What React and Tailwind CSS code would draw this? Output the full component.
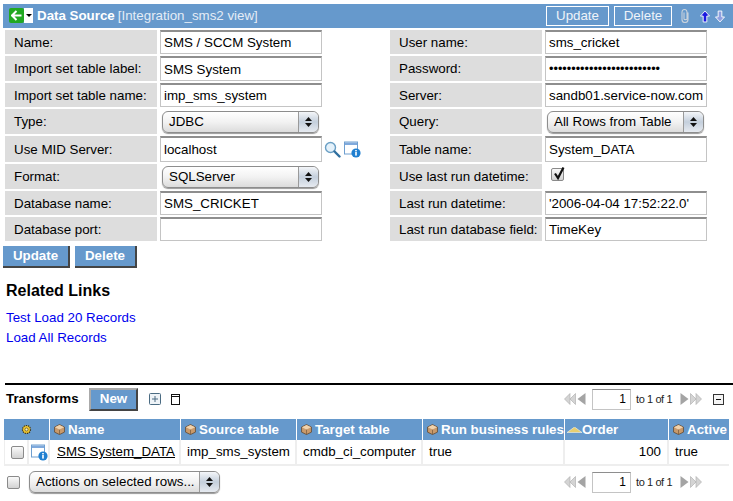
import React from "react";

const leftRows = [
  { label: "Name:", value: "SMS / SCCM System", h: "h-[24px]" },
  { label: "Import set table label:", value: "SMS System", h: "h-[25px]" },
  { label: "Import set table name:", value: "imp_sms_system", h: "h-[24px]" },
  { label: "Type:", select: "JDBC", h: "h-[25px]" },
  { label: "Use MID Server:", value: "localhost", h: "h-[26px]", lookup: true },
  { label: "Format:", select: "SQLServer", h: "h-[25px]" },
  { label: "Database name:", value: "SMS_CRICKET", h: "h-[24px]" },
  { label: "Database port:", value: "", h: "h-[24px]" },
];

const rightRows = [
  { label: "User name:", value: "sms_cricket", h: "h-[24px]" },
  { label: "Password:", value: "•••••••••••••••••••••••••", h: "h-[25px]", small: true },
  { label: "Server:", value: "sandb01.service-now.com", h: "h-[24px]" },
  { label: "Query:", select: "All Rows from Table", h: "h-[25px]" },
  { label: "Table name:", value: "System_DATA", h: "h-[26px]" },
  { label: "Use last run datetime:", check: true, h: "h-[25px]" },
  { label: "Last run datetime:", value: "'2006-04-04 17:52:22.0'", h: "h-[24px]" },
  { label: "Last run database field:", value: "TimeKey", h: "h-[24px]" },
];

const Stepper = () => (
  <span className="w-[20px] h-full border-l border-[#9a9a9a] bg-gradient-to-b from-[#f4f6f9] via-[#c4cfdc] to-[#e6eaf0] flex flex-col items-center justify-center gap-[2px] rounded-r-[5px]">
    <svg width="7" height="4" viewBox="0 0 7 4"><path d="M3.5 0L7 4H0z" fill="#111" /></svg>
    <svg width="7" height="4" viewBox="0 0 7 4"><path d="M3.5 4L7 0H0z" fill="#111" /></svg>
  </span>
);

const Select = ({ text, w }) => (
  <div className={`${w} h-[22px] flex items-center justify-between border border-[#8d8d8d] rounded-[6px] bg-gradient-to-b from-[#ffffff] via-[#f2f2f2] to-[#dcdcdc] shadow-[0_1px_1px_#999] overflow-hidden`}>
    <span className="pl-[6px] text-[13.33px] text-black whitespace-nowrap">{text}</span>
    <Stepper />
  </div>
);

const Input = ({ value, small }) => (
  <div className="w-[162px] h-full bg-white border border-[#c4c4c4] border-t-[#8e8e8e] border-t-[2px] pl-[3px] pt-[1px] flex items-center overflow-hidden whitespace-nowrap text-black text-[13.33px]">
    <span className={small ? "text-[12.7px]" : ""}>{value}</span>
  </div>
);

const Checkbox = ({ checked }) => (
  <span className="relative w-[13px] h-[13px] border border-[#8a8a8a] rounded-[2px] bg-gradient-to-b from-[#fafafa] to-[#d2d2d2] inline-block shrink-0">
    {checked && (
      <svg className="absolute left-0 -top-[3px]" width="14" height="15" viewBox="0 0 14 15">
        <path d="M3 7.5L6 12L11.5 1.5" fill="none" stroke="#111" strokeWidth="2.2" />
      </svg>
    )}
  </span>
);

const MagnifierIcon = () => (
  <svg width="17" height="17" viewBox="0 0 17 17">
    <circle cx="6.5" cy="6.5" r="5" fill="#e4f1fa" stroke="#6a9fc4" strokeWidth="1.4" />
    <path d="M10.5 10.5L15.5 15.5" stroke="#2f6f9f" strokeWidth="2.4" strokeLinecap="round" />
  </svg>
);

const InfoIcon = () => (
  <svg width="17" height="17" viewBox="0 0 17 17">
    <rect x="0.5" y="1" width="13" height="12" fill="#fff" stroke="#6f9fd0" />
    <rect x="1" y="1.5" width="12" height="2.5" fill="#7fa9dc" />
    <circle cx="12" cy="12" r="4.6" fill="#1f7fd0" />
    <rect x="11.2" y="11" width="1.6" height="3.6" fill="#fff" />
    <rect x="11.2" y="9" width="1.6" height="1.4" fill="#fff" />
  </svg>
);

const CubeIcon = () => (
  <svg width="11" height="11" viewBox="0 0 10 10" className="shrink-0">
    <path d="M5 0.5L9.5 2.8V7.4L5 9.6L0.5 7.4V2.8z" fill="#c99a6b" stroke="#5c4630" strokeWidth="0.7" />
    <path d="M0.8 3L5 5.1L9.2 3L5 1z" fill="#f0d3ae" />
    <path d="M5 5.2V9.4" stroke="#6e5238" strokeWidth="0.6" />
  </svg>
);

const GearIcon = () => (
  <svg width="11" height="11" viewBox="0 0 11 11">
    <circle cx="5.5" cy="5.5" r="4" fill="#f0c830" stroke="#3a3320" strokeWidth="1.2" strokeDasharray="1.4 0.8" />
    <circle cx="5.5" cy="5.5" r="1.5" fill="#fff3b0" stroke="#3a3320" strokeWidth="0.6" />
  </svg>
);

const Pager = () => (
  <div className="flex items-center">
    <svg width="22" height="12" viewBox="0 0 22 12">
      <path d="M6 0.5V11.5L0.5 6z" fill="#d4d4d4" stroke="#aaa" strokeWidth="0.6" />
      <path d="M11.5 0.5V11.5L6 6z" fill="#d4d4d4" stroke="#aaa" strokeWidth="0.6" />
      <path d="M21.5 0V12L13.5 6z" fill="#a4a4a4" />
    </svg>
    <div className="w-[39px] h-[21px] ml-[6px] bg-white border border-[#c4c4c4] border-t-[#8e8e8e] flex items-center justify-end pr-[4px] text-[12px] text-black">1</div>
    <span className="ml-[5px] text-[11px] tracking-[-0.4px] text-[#222] w-[37px] whitespace-nowrap">to 1 of 1</span>
    <svg width="22" height="12" viewBox="0 0 22 12" className="ml-[7px]">
      <path d="M0.5 0V12L8.5 6z" fill="#a4a4a4" />
      <path d="M10.5 0.5V11.5L16 6z" fill="#d4d4d4" stroke="#aaa" strokeWidth="0.6" />
      <path d="M16 0.5V11.5L21.5 6z" fill="#d4d4d4" stroke="#aaa" strokeWidth="0.6" />
    </svg>
  </div>
);

const columns = [
  { label: "Name", w: "w-[131px]" },
  { label: "Source table", w: "w-[116px]" },
  { label: "Target table", w: "w-[126px]" },
  { label: "Run business rules", w: "w-[142px]" },
  { label: "Order", w: "w-[104px] -ml-[2px] pr-[2px]", sort: true },
  { label: "Active", w: "w-[59px]" },
];

const FormRow = ({ row }) => (
  <div className={`flex ${row.h} mb-[2px]`}>
    <div className="w-[152px] bg-[#dddddd] pl-[9px] pt-[1px] flex items-center text-[13.33px] text-black whitespace-nowrap">{row.label}</div>
    <div className="ml-[3px] flex items-center h-full">
      {row.select && <Select text={row.select} w="w-[157px] ml-[2px]" />}
      {row.check && <span className="ml-[6px]"><Checkbox checked /></span>}
      {row.value !== undefined && <Input value={row.value} small={row.small} />}
      {row.lookup && (
        <span className="flex items-center gap-[3px] ml-[2px]">
          <MagnifierIcon />
          <InfoIcon />
        </span>
      )}
    </div>
  </div>
);

export default function App() {
  return (
    <div className="w-[733px] h-[501px] overflow-hidden bg-white pt-[4px] font-['Liberation_Sans',Arial,sans-serif] text-[13.33px]">
      {/* Title bar */}
      <div className="ml-[3px] h-[24px] bg-[#6699cc] flex items-center justify-between pl-[6px] pr-[8px]">
        <div className="flex items-center">
          <span className="w-[15px] h-[15px] bg-[#22a822] rounded-[2px] flex items-center justify-center">
            <svg width="11" height="11" viewBox="0 0 11 11"><path d="M5.5 1L1 5.5L5.5 10M1.5 5.5H10.5" fill="none" stroke="#fff" strokeWidth="2" /></svg>
          </span>
          <span className="w-[9px] h-[15px] bg-white flex items-center justify-center">
            <svg width="6" height="3" viewBox="0 0 6 3"><path d="M0 0H6L3 3z" fill="#000" /></svg>
          </span>
          <span className="ml-[4px] text-white font-bold">Data Source</span>
          <span className="ml-[3px] text-[#e4ecf6]">[Integration_sms2 view]</span>
        </div>
        <div className="flex items-center">
          <span className="w-[63px] h-[20px] border border-white text-[#eef3f9] flex items-center justify-center">Update</span>
          <span className="ml-[5px] w-[58px] h-[20px] border border-white text-[#eef3f9] flex items-center justify-center">Delete</span>
          <svg className="ml-[9px]" width="8" height="14" viewBox="0 0 8 14">
            <path d="M7 3.5V10.5C7 12.5 5.7 13.5 4 13.5S1 12.5 1 10.5V3C1 1.5 2 0.5 3.5 0.5S6 1.5 6 3V10C6 11 3 11 3 10V3.5" fill="none" stroke="#c8d2dc" strokeWidth="1.1" />
          </svg>
          <svg className="ml-[11px]" width="10" height="13" viewBox="0 0 11 13"><path d="M5.5 0.5L10.5 6H7.5V12.5H3.5V6H0.5z" fill="#1a1ae0" stroke="#fff" /></svg>
          <svg className="ml-[5px]" width="10" height="13" viewBox="0 0 11 13"><path d="M5.5 12.5L10.5 7H7.5V0.5H3.5V7H0.5z" fill="#8f9fe0" stroke="#fff" /></svg>
        </div>
      </div>

      {/* Form */}
      <div className="flex mt-[2px] ml-[5px]">
        <div className="w-[385px]">
          {leftRows.map((row) => <FormRow key={row.label} row={row} />)}
        </div>
        <div>
          {rightRows.map((row) => <FormRow key={row.label} row={row} />)}
        </div>
      </div>

      {/* Buttons */}
      <div className="flex ml-[3px] gap-[5px] mt-[3px]">
        <span className="w-[67px] h-[22px] bg-[#6699cc] border-r-2 border-b-2 border-[#444] text-white font-bold flex items-center justify-center">Update</span>
        <span className="w-[62px] h-[22px] bg-[#6699cc] border-r-2 border-b-2 border-[#444] text-white font-bold flex items-center justify-center">Delete</span>
      </div>

      {/* Related links */}
      <div className="ml-[6px] mt-[13px] text-[16px] font-bold leading-[19px] text-black">Related Links</div>
      <div className="ml-[6px] mt-[8px] text-[13.33px] leading-[20px] text-[#0000ee]">
        <div>Test Load 20 Records</div>
        <div>Load All Records</div>
      </div>

      {/* Transforms */}
      <div className="ml-[5px] mt-[35px] border-t-2 border-black" />
      <div className="flex items-center justify-between h-[24px] mt-[2px] ml-[6px] pr-[9px]">
        <div className="flex items-center">
          <span className="font-bold text-black w-[83px]">Transforms</span>
          <span className="w-[49px] h-[23px] bg-[#6699cc] border-t-2 border-l-2 border-[#aaa] border-r-2 border-b-2 border-r-[#444] border-b-[#444] text-white font-bold flex items-center justify-center">New</span>
          <svg className="ml-[11px]" width="12" height="12" viewBox="0 0 12 12">
            <rect x="0.5" y="0.5" width="11" height="11" rx="1" fill="#eef3f7" stroke="#4a6b82" />
            <path d="M6 3V9M3 6H9" stroke="#4a6b82" />
          </svg>
          <svg className="ml-[10px]" width="9" height="11" viewBox="0 0 9 11">
            <rect x="0.5" y="0.5" width="8" height="10" fill="#fff" stroke="#111" />
            <path d="M0.5 2.5H8.5" stroke="#111" />
          </svg>
        </div>
        <div className="flex items-center">
          <Pager />
          <svg className="ml-[11px]" width="11" height="11" viewBox="0 0 11 11">
            <rect x="0.5" y="0.5" width="10" height="10" fill="#f4f4f4" stroke="#333" />
            <path d="M3 5.5H8" stroke="#111" />
          </svg>
        </div>
      </div>

      {/* List */}
      <div className="ml-[4px] mt-[8px] w-[725px]">
        <div className="flex h-[21px] bg-[#6699cc]">
          <div className="w-[46px] border-r border-white flex items-center justify-center"><GearIcon /></div>
          {columns.map((col) => (
            <div key={col.label} className={`${col.sort ? "w-[104px] pl-[2px]" : `${col.w} pl-[4px]`} border-r border-white last:border-r-0 flex items-center text-white font-bold whitespace-nowrap overflow-hidden`}>
              {col.sort ? (
                <svg width="15" height="6" viewBox="0 0 15 6" className="shrink-0"><path d="M7.5 0L15 5.5H0z" fill="#e8cf70" stroke="#fff" strokeWidth="0.5" /></svg>
              ) : <CubeIcon />}
              <span className={col.sort ? "" : "ml-[3px]"}>{col.label}</span>
            </div>
          ))}
        </div>
        <div className="flex h-[26px] border-b-2 border-l border-[#eeeeee] text-black">
          <div className="w-[24px] border-r-2 border-[#eeeeee] flex items-center justify-center pl-[2px]"><Checkbox /></div>
          <div className="w-[21px] border-r-2 border-[#eeeeee] flex items-center pl-[2px]"><InfoIcon /></div>
          <div className="w-[131px] border-r-2 border-[#eeeeee] flex items-center pl-[7px] underline whitespace-nowrap">SMS System_DATA</div>
          <div className="w-[116px] border-r-2 border-[#eeeeee] flex items-center pl-[6px] whitespace-nowrap">imp_sms_system</div>
          <div className="w-[126px] border-r-2 border-[#eeeeee] flex items-center pl-[6px] whitespace-nowrap">cmdb_ci_computer</div>
          <div className="w-[142px] border-r-2 border-[#eeeeee] flex items-center pl-[6px]">true</div>
          <div className="w-[104px] border-r-2 border-[#eeeeee] flex items-center justify-end pr-[6px]">100</div>
          <div className="w-[59px] flex items-center pl-[6px]">true</div>
        </div>
      </div>

      {/* Footer actions */}
      <div className="flex items-center justify-between h-[24px] mt-[4px] ml-[7px] pr-[31px]">
        <div className="flex items-center">
          <Checkbox />
          <span className="ml-[9px]"><Select text="Actions on selected rows..." w="w-[191px]" /></span>
        </div>
        <Pager />
      </div>
    </div>
  );
}
